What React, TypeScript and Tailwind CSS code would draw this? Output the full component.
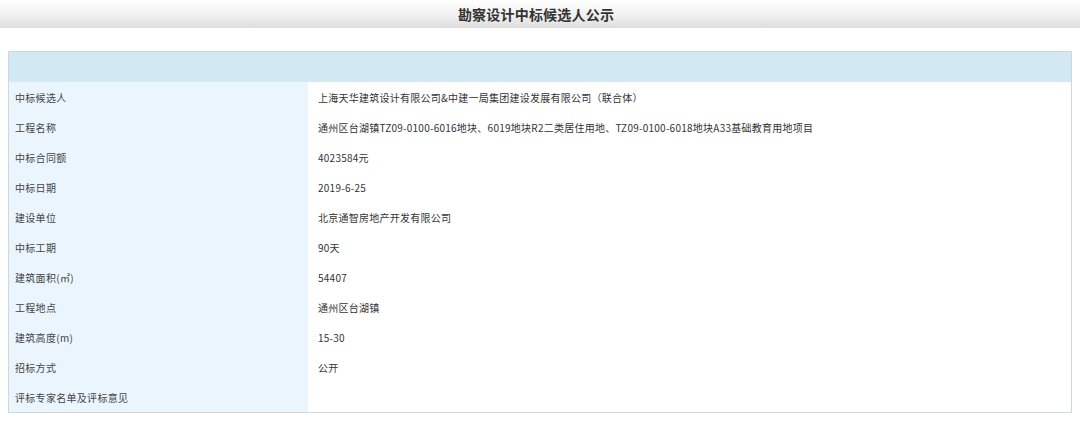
const rows: [string, string][] = [
  ['中标候选人', '上海天华建筑设计有限公司&中建一局集团建设发展有限公司（联合体）'],
  ['工程名称', '通州区台湖镇TZ09-0100-6016地块、6019地块R2二类居住用地、TZ09-0100-6018地块A33基础教育用地项目'],
  ['中标合同额', '4023584元'],
  ['中标日期', '2019-6-25'],
  ['建设单位', '北京通智房地产开发有限公司'],
  ['中标工期', '90天'],
  ['建筑面积(㎡)', '54407'],
  ['工程地点', '通州区台湖镇'],
  ['建筑高度(m)', '15-30'],
  ['招标方式', '公开'],
  ['评标专家名单及评标意见', ''],
]

export default function App() {
  return (
    <div className="w-[1080px] h-[422px] bg-white font-['Noto_Sans_CJK_SC',sans-serif] overflow-hidden">
      <div className="h-[28px] flex items-center justify-center bg-[linear-gradient(to_bottom,#ffffff,#f0f0f0_55%,#dedede)]">
        <h1 className="text-[14px] font-bold text-[#333] leading-none tracking-[0.2px] -ml-[8px]">
          勘察设计中标候选人公示
        </h1>
      </div>

      <div className="mx-[8px] mt-[23px] w-[1064px] border border-[#cfd6dc]">
        <div className="h-[30px] bg-[#d2e8f2]" />
        {rows.map(([label, value]) => (
          <div key={label} className="flex h-[30px]">
            <div className="w-[299px] shrink-0 bg-[#eaf5fe] pl-[6px] flex items-center text-[10px] text-[#444] tracking-[0.3px]">
              {label}
            </div>
            <div className="flex-1 pl-[10px] flex items-center text-[10px] text-[#333] tracking-[0.25px] whitespace-nowrap">
              {value}
            </div>
          </div>
        ))}
      </div>
    </div>
  )
}
